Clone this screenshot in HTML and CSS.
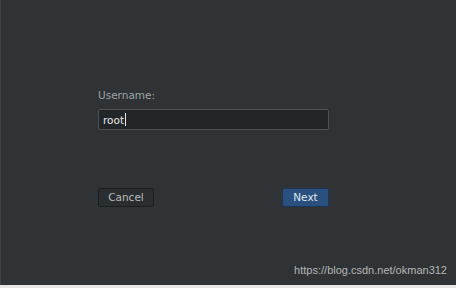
FILE: index.html
```html
<!DOCTYPE html>
<html>
<head>
<meta charset="utf-8">
<link rel="stylesheet" href="styles.css">
</head>
<body>
<div class="screen">
  <div class="form">
    <label class="label">Username:</label>
    <div class="input"><span class="value">root</span><span class="caret"></span></div>
    <div class="actions">
      <div class="btn cancel">Cancel</div>
      <div class="btn next">Next</div>
    </div>
  </div>
  <div class="watermark">https://blog.csdn.net/okman312</div>
</div>
<div class="strip"></div>
</body>
</html>
```
FILE: styles.css
```css
html, body {
  margin: 0;
  padding: 0;
  width: 456px;
  height: 288px;
  overflow: hidden;
  background: #e6e6e6;
}
.screen {
  height: 285px;
  background: #2f3336;
  border-left: 1px solid #3d4244;
  box-sizing: border-box;
  display: flex;
  flex-direction: column;
  font-family: "DejaVu Sans", sans-serif;
}
.form {
  margin-left: 97px;
  width: 231px;
  padding-top: 88px;
  display: flex;
  flex-direction: column;
}
.label {
  font-size: 10.5px;
  line-height: 14px;
  color: #9ea3a4;
  height: 21px;
}
.input {
  height: 21px;
  box-sizing: border-box;
  background: #232628;
  border: 1px solid #4c5153;
  border-radius: 2px;
  display: flex;
  align-items: center;
  padding-left: 4px;
  font-size: 10.5px;
  color: #e6e8e8;
}
.caret {
  width: 1px;
  height: 13px;
  background: #e6e8e8;
  margin-left: 1px;
}
.actions {
  margin-top: 58px;
  display: flex;
  justify-content: space-between;
}
.btn {
  height: 19px;
  box-sizing: border-box;
  border-radius: 2px;
  font-size: 10.5px;
  line-height: 17px;
  text-align: center;
}
.cancel {
  width: 56px;
  background: #2a2e30;
  border: 1px solid #1b1e1f;
  color: #b9bdbe;
}
.next {
  width: 47px;
  background: #2a5080;
  border: 1px solid #1d3554;
  color: #dfe6ee;
}
.watermark {
  margin-top: auto;
  align-self: flex-end;
  margin-right: 9px;
  margin-bottom: 8px;
  font-family: "Liberation Sans", Arial, sans-serif;
  font-size: 11px;
  line-height: 14px;
  color: #b4b6b7;
}
.strip {
  height: 3px;
  background: #e6e6e6;
}
```
